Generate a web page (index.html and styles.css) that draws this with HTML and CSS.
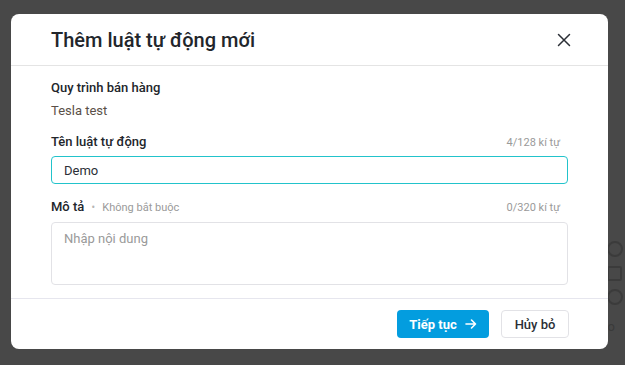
FILE: index.html
```html
<!DOCTYPE html>
<html lang="vi">
<head>
<meta charset="UTF-8">
<meta name="viewport" content="width=device-width, initial-scale=1.0">
<title>Thêm luật tự động mới</title>
<link rel="stylesheet" href="styles.css">
</head>
<body>
<div class="page-behind">
  <span class="bg-circle bg-c1"></span>
  <span class="bg-square"></span>
  <span class="bg-circle bg-c2"></span>
  <span class="bg-text">Cho tr</span>
</div>
<div class="overlay">
  <div class="modal">
    <div class="modal-header">
      <h2 class="modal-title">Thêm luật tự động mới</h2>
      <button class="close-btn" aria-label="Đóng">
        <svg width="14" height="14" viewBox="0 0 14 14">
          <path d="M1.5 1.5 L12.5 12.5 M12.5 1.5 L1.5 12.5" stroke="#2b2f36" stroke-width="1.5" fill="none" stroke-linecap="round"/>
        </svg>
      </button>
    </div>
    <div class="modal-body">
      <div class="field field-pipeline">
        <div class="label">Quy trình bán hàng</div>
        <div class="value">Tesla test</div>
      </div>
      <div class="field field-name">
        <div class="label-row">
          <span class="label">Tên luật tự động</span>
          <span class="counter">4/128 kí tự</span>
        </div>
        <input class="text-input" type="text" value="Demo">
      </div>
      <div class="field">
        <div class="label-row">
          <span class="label">Mô tả <span class="dot">•</span> <span class="optional">Không bắt buộc</span></span>
          <span class="counter">0/320 kí tự</span>
        </div>
        <textarea class="text-area" placeholder="Nhập nội dung"></textarea>
      </div>
    </div>
    <div class="modal-footer">
      <button class="btn btn-primary">Tiếp tục
        <svg width="12" height="12" viewBox="0 0 12 12">
          <path d="M1 6 H10.5 M6.5 2 L10.5 6 L6.5 10" stroke="#fff" stroke-width="1.6" fill="none" stroke-linecap="round" stroke-linejoin="round"/>
        </svg>
      </button>
      <button class="btn btn-default">Hủy bỏ</button>
    </div>
  </div>
</div>
</body>
</html>
```
FILE: styles.css
```css
html, body {
  margin: 0;
  height: 100%;
  background-color: #484848;
  font-family: Roboto, "Noto Sans", sans-serif;
  color: #222;
}
.page-behind {
  position: absolute;
  inset: 0;
  overflow: hidden;
}
.bg-circle {
  position: absolute;
  left: 607px;
  width: 12px;
  height: 12px;
  border: 2px solid #3b3b3b;
  border-radius: 50%;
}
.bg-c1 { top: 241px; }
.bg-c2 { top: 289px; }
.bg-square {
  position: absolute;
  left: 607px;
  top: 266px;
  width: 11px;
  height: 11px;
  border: 2px solid #3b3b3b;
  border-radius: 2px;
}
.bg-text {
  position: absolute;
  left: 592px;
  top: 319px;
  font-size: 13px;
  color: #3a3a3a;
}

.overlay {
  position: relative;
  padding: 14px 0 0 11px;
}
.modal {
  width: 597px;
  height: 335px;
  background: #fff;
  border-radius: 8px;
  display: flex;
  flex-direction: column;
  overflow: hidden;
}
.modal-header {
  height: 51px;
  border-bottom: 1px solid #e4e4e4;
  display: flex;
  align-items: center;
  justify-content: space-between;
  padding: 0 37px 0 40px;
}
.modal-title {
  margin: 0;
  font-size: 20px;
  font-weight: 500;
  color: #22262b;
}
.close-btn {
  border: none;
  background: none;
  padding: 0;
  width: 14px;
  height: 14px;
  cursor: pointer;
}
.close-btn svg { display: block; }

.modal-body {
  flex: 1;
  padding: 13px 40px 0;
  overflow: hidden;
}
.field {
  margin-bottom: 16px;
}
.field-pipeline {
  margin-bottom: 13px;
}
.field-name {
  margin-bottom: 14px;
}
.label {
  font-size: 13px;
  line-height: 18px;
  font-weight: 500;
  color: #22262b;
}
.value {
  margin-top: 5px;
  font-size: 13px;
  line-height: 18px;
  color: #5a5048;
}
.label-row {
  display: flex;
  justify-content: space-between;
  align-items: baseline;
  margin-bottom: 5px;
}
.dot {
  color: #b5b5b5;
  font-size: 10px;
  margin: 0 4px;
}
.optional, .counter {
  font-size: 11px;
  font-weight: 400;
  color: #9a9a9a;
}
.counter {
  margin-right: 8px;
}
.text-input, .text-area {
  display: block;
  width: 100%;
  box-sizing: border-box;
  font-family: inherit;
  font-size: 13px;
  color: #2b2f36;
  border-radius: 4px;
  outline: none;
}
.text-input {
  height: 28px;
  padding: 0 12px;
  border: 1px solid #22c3cb;
}
.text-area {
  height: 63px;
  padding: 7px 12px;
  border: 1px solid #e2e2e6;
  resize: none;
  line-height: 18px;
}
.text-area::placeholder { color: #9a9a9a; }

.modal-footer {
  height: 50px;
  border-top: 1px solid #e6e6ee;
  display: flex;
  align-items: center;
  justify-content: flex-end;
  gap: 12px;
  padding: 0 39px;
}
.btn {
  height: 28px;
  border-radius: 4px;
  font-family: inherit;
  font-size: 13px;
  font-weight: 700;
  display: flex;
  align-items: center;
  justify-content: center;
  gap: 8px;
  cursor: pointer;
}
.btn-primary {
  width: 92px;
  background: #039ddf;
  border: none;
  color: #fff;
}
.btn-default {
  width: 68px;
  background: #fff;
  border: 1px solid #e2e2e6;
  color: #2b2f36;
  font-weight: 500;
}
```
